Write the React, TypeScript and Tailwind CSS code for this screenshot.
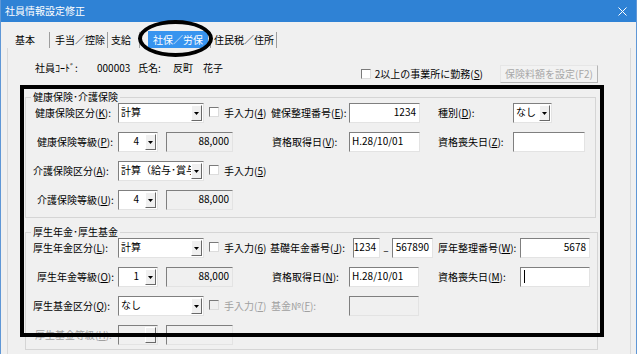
import React from "react";

const sunken =
  "border border-t-[#7f7f7f] border-l-[#7f7f7f] border-r-[#e3e3e3] border-b-[#e3e3e3]";

type MnProps = { text: string; k: string; colon?: boolean; disabled?: boolean };

const Mn: React.FC<MnProps> = ({ text, k, colon = true, disabled }) => (
  <span className={`whitespace-nowrap ${disabled ? "text-[#a0a0a0]" : "text-black"}`}>
    {text}(<u>{k}</u>){colon ? ":" : ""}
  </span>
);

const DropButton: React.FC<{ disabled?: boolean }> = ({ disabled }) => (
  <span className="my-[1px] mr-[1px] flex w-[11px] shrink-0 items-center justify-center border border-t-white border-l-white border-r-[#696969] border-b-[#696969] bg-[#f0f0f0]">
    <svg width="5" height="3" viewBox="0 0 5 3">
      <polygon points="0,0 5,0 2.5,3" fill={disabled ? "#a0a0a0" : "#000"} />
    </svg>
  </span>
);

interface ComboProps {
  value: string;
  className: string;
  right?: boolean;
  disabled?: boolean;
}

const Combo: React.FC<ComboProps> = ({ value, className, right, disabled }) => (
  <div className={`flex h-[20px] ${sunken} ${disabled ? "bg-[#f0f0f0]" : "bg-white"} ${className}`}>
    <span
      className={`flex-1 overflow-hidden whitespace-nowrap pt-[1px] leading-[14px] ${
        right ? "pr-[6px] text-right" : "pl-[2px]"
      }`}
    >
      {value}
    </span>
    <DropButton disabled={disabled} />
  </div>
);

interface FieldProps {
  value?: string;
  className: string;
  right?: boolean;
  disabled?: boolean;
  caret?: boolean;
}

const Field: React.FC<FieldProps> = ({ value = "", className, right, disabled, caret }) => (
  <div
    className={`flex h-[20px] ${sunken} ${disabled ? "bg-[#f0f0f0]" : "bg-white"} ${className} ${
      right ? "justify-end pr-[3px]" : "pl-[2px]"
    }`}
  >
    {caret && <span className="mt-[2px] ml-[1px] h-[13px] w-px bg-black" />}
    <span className="whitespace-nowrap pt-[1px] leading-[14px]">{value}</span>
  </div>
);

const ReadOnly: React.FC<{ value?: string }> = ({ value = "" }) => (
  <div className={`ml-[8px] h-[20px] w-[67px] ${sunken} bg-[#f0f0f0] pr-[3px] pt-[1px] text-right leading-[14px]`}>
    {value}
  </div>
);

const Check: React.FC<{ disabled?: boolean }> = ({ disabled }) => (
  <span
    className={`inline-block h-[10px] w-[10px] shrink-0 border border-t-[#7a7a7a] border-l-[#7a7a7a] border-r-[#dcdcdc] border-b-[#dcdcdc] ${
      disabled ? "bg-[#f0f0f0]" : "bg-white"
    }`}
  />
);

const Manual: React.FC<{ k: string; disabled?: boolean }> = ({ k, disabled }) => (
  <span className="flex items-center">
    <span className="ml-[5px]">
      <Check disabled={disabled} />
    </span>
    <span className="ml-[5px]">
      <Mn text="手入力" k={k} colon={false} disabled={disabled} />
    </span>
  </span>
);

const Sep = () => <span className="h-[16px] w-px bg-[#9d9d9d]" />;

export default function App() {
  return (
    <div className="relative h-[354px] w-[642px] overflow-hidden bg-white font-['Noto_Sans_CJK_JP','Noto_Sans',sans-serif] text-[10px] leading-[14px] text-black">
      <div className="flex h-full w-[637px] flex-col border-x border-[#5f97d6] bg-[#f0f0f0]">
        {/* title bar */}
        <div className="flex h-[22px] shrink-0 items-center justify-between bg-[#2f82d5] pl-[4px] pr-[9px] text-white">
          <span className="text-[10px]">社員情報設定修正</span>
          <svg width="9" height="9" viewBox="0 0 9 9">
            <path d="M0.5 0.5 L8.5 8.5 M8.5 0.5 L0.5 8.5" stroke="#fff" strokeWidth="1" />
          </svg>
        </div>

        {/* tabs */}
        <div className="flex h-[26px] shrink-0 items-end pl-[14px]">
          <div className="flex h-[17px] items-center">
            <span>基本</span>
            <span className="ml-[14px] flex"><Sep /></span>
            <span className="ml-[5px]">手当／控除</span>
            <span className="ml-[2px] flex"><Sep /></span>
            <span className="ml-[3px]">支給</span>
            <span className="ml-[8px] flex"><Sep /></span>
            <span className="ml-[8px] flex h-[17px] w-[60px] items-center justify-center bg-[#3794ef] text-white">
              社保／労保
            </span>
            <span className="ml-[2px] flex"><Sep /></span>
            <span className="ml-[3px]">住民税／住所</span>
            <span className="ml-[2px] flex"><Sep /></span>
          </div>
        </div>

        {/* tab page */}
        <div className="ml-[6px] flex w-[624px] flex-1 flex-col border-x border-[#d9d9d9] pl-[17px]">
          <div className="mt-[16px] flex h-[19px] items-center pr-[32px]">
            <div className="-mt-[3px] flex self-start">
              <span className="ml-[10px] w-[62px]">社員ｺｰﾄﾞ:</span>
              <span className="w-[41px]">000003</span>
              <span className="w-[35px]">氏名:</span>
              <span>反町　花子</span>
            </div>
            <div className="flex-1" />
            <Check />
            <span className="ml-[4px]">
              2以上の事業所に勤務(<u>S</u>)
            </span>
            <div className="ml-[17px] flex h-[18px] w-[98px] items-center justify-center border border-t-[#e6e6e6] border-l-[#e6e6e6] border-r-[#b5b5b5] border-b-[#b5b5b5] bg-[#f2f2f2] text-[#a8a8a8]">
              保険料額を設定(F2)
            </div>
          </div>

          {/* 健康保険・介護保険 */}
          <fieldset className="mt-[8px] w-[571px] border border-[#d5d5d5] pb-[7px] pl-[5px] pr-[7px]">
            <legend className="px-[2px] leading-[12px]">健康保険･介護保険</legend>
            <div className="ml-[2px] grid auto-rows-[20px] grid-cols-[85px_153px_78px_89px_75px_1fr] items-center gap-y-[9px]">
              <span className="pl-[2px]"><Mn text="健康保険区分" k="K" /></span>
              <div className="flex items-center">
                <Combo value="計算" className="w-[86px]" />
                <Manual k="4" />
              </div>
              <Mn text="健保整理番号" k="E" />
              <Field value="1234" className="w-[71px]" right />
              <Mn text="種別" k="D" />
              <Combo value="なし" className="w-[39px]" />

              <span className="pl-[4px]"><Mn text="健康保険等級" k="P" /></span>
              <div className="flex items-center">
                <Combo value="4" className="w-[40px]" right />
                <ReadOnly value="88,000" />
              </div>
              <span className="pl-[1px]"><Mn text="資格取得日" k="V" /></span>
              <Field value="H.28/10/01" className="w-[71px]" />
              <Mn text="資格喪失日" k="Z" />
              <Field className="w-[72px]" />

              <span><Mn text="介護保険区分" k="A" /></span>
              <div className="flex items-center">
                <Combo value="計算（給与･賞与）" className="w-[86px]" />
                <Manual k="5" />
              </div>
              <span className="col-span-4" />

              <span className="pl-[4px]"><Mn text="介護保険等級" k="U" /></span>
              <div className="flex items-center">
                <Combo value="4" className="w-[40px]" right />
                <ReadOnly value="88,000" />
              </div>
              <span className="col-span-4" />
            </div>
          </fieldset>

          {/* 厚生年金・厚生基金 */}
          <fieldset className="mt-[8px] w-[571px] border border-[#d5d5d5] pb-[4px] pl-[5px] pr-[7px]">
            <legend className="px-[2px] leading-[12px]">厚生年金･厚生基金</legend>
            <div className="ml-[2px] grid auto-rows-[20px] grid-cols-[85px_153px_78px_89px_82px_1fr] items-center gap-y-[9px]">
              <span><Mn text="厚生年金区分" k="L" /></span>
              <div className="flex items-center">
                <Combo value="計算" className="w-[86px]" />
                <Manual k="6" />
              </div>
              <span className="-ml-[1px]"><Mn text="基礎年金番号" k="J" /></span>
              <div className="flex items-center">
                <Field value="1234" className="ml-[4px] w-[27px]" right />
                <span className="w-[12px] pt-[4px] text-center">–</span>
                <Field value="567890" className="w-[41px]" right />
              </div>
              <Mn text="厚年整理番号" k="W" />
              <Field value="5678" className="w-[70px]" right />

              <span className="pl-[4px]"><Mn text="厚生年金等級" k="O" /></span>
              <div className="flex items-center">
                <Combo value="1" className="w-[40px]" right />
                <ReadOnly value="88,000" />
              </div>
              <span className="pl-[1px]"><Mn text="資格取得日" k="N" /></span>
              <Field value="H.28/10/01" className="w-[70px]" />
              <Mn text="資格喪失日" k="M" />
              <Field className="w-[70px]" caret />

              <span><Mn text="厚生基金区分" k="Q" /></span>
              <div className="flex items-center">
                <Combo value="なし" className="w-[86px]" />
                <Manual k="7" disabled />
              </div>
              <Mn text="基金№" k="F" disabled />
              <Field className="w-[70px]" disabled />
              <span className="col-span-2" />

              <span className="pl-[2px]"><Mn text="厚生基金等級" k="H" disabled /></span>
              <div className="flex items-center">
                <Combo value="" className="w-[40px]" disabled />
                <ReadOnly />
              </div>
              <span className="col-span-4" />
            </div>
          </fieldset>
        </div>
      </div>

      {/* annotations drawn over the screenshot */}
      <div className="pointer-events-none absolute left-[138px] top-[20px] h-[37px] w-[75px] rounded-[50%] border-[4px] border-black" />
      <div className="pointer-events-none absolute left-[20px] top-[85px] h-[252px] w-[584px] border-[4px] border-black" />
    </div>
  );
}
